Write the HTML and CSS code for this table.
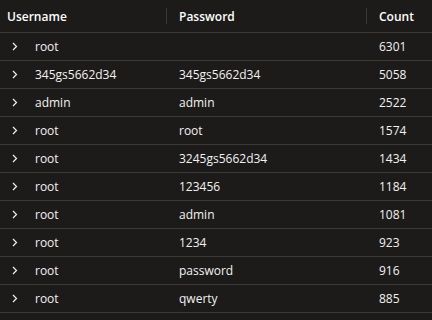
FILE: index.html
```html
<!DOCTYPE html>
<html lang="en">
<head>
  <meta charset="UTF-8">
  <title>Credentials</title>
  <link rel="stylesheet" href="styles.css">
</head>
<body>
  <div class="table">
    <div class="row head">
      <div class="cell first">Username</div>
      <div class="cell"><span class="sep"></span>Password</div>
      <div class="cell"><span class="sep"></span>Count</div>
    </div>
    <div class="row">
      <div class="cell first"><span class="chev"><svg width="6" height="9" viewBox="0 0 6 9"><path d="M1 1l3.5 3.5L1 8" fill="none" stroke="#f3f2f1" stroke-width="1.2"/></svg></span>root</div>
      <div class="cell"></div>
      <div class="cell">6301</div>
    </div>
    <div class="row">
      <div class="cell first"><span class="chev"><svg width="6" height="9" viewBox="0 0 6 9"><path d="M1 1l3.5 3.5L1 8" fill="none" stroke="#f3f2f1" stroke-width="1.2"/></svg></span>345gs5662d34</div>
      <div class="cell">345gs5662d34</div>
      <div class="cell">5058</div>
    </div>
    <div class="row">
      <div class="cell first"><span class="chev"><svg width="6" height="9" viewBox="0 0 6 9"><path d="M1 1l3.5 3.5L1 8" fill="none" stroke="#f3f2f1" stroke-width="1.2"/></svg></span>admin</div>
      <div class="cell">admin</div>
      <div class="cell">2522</div>
    </div>
    <div class="row">
      <div class="cell first"><span class="chev"><svg width="6" height="9" viewBox="0 0 6 9"><path d="M1 1l3.5 3.5L1 8" fill="none" stroke="#f3f2f1" stroke-width="1.2"/></svg></span>root</div>
      <div class="cell">root</div>
      <div class="cell">1574</div>
    </div>
    <div class="row">
      <div class="cell first"><span class="chev"><svg width="6" height="9" viewBox="0 0 6 9"><path d="M1 1l3.5 3.5L1 8" fill="none" stroke="#f3f2f1" stroke-width="1.2"/></svg></span>root</div>
      <div class="cell">3245gs5662d34</div>
      <div class="cell">1434</div>
    </div>
    <div class="row">
      <div class="cell first"><span class="chev"><svg width="6" height="9" viewBox="0 0 6 9"><path d="M1 1l3.5 3.5L1 8" fill="none" stroke="#f3f2f1" stroke-width="1.2"/></svg></span>root</div>
      <div class="cell">123456</div>
      <div class="cell">1184</div>
    </div>
    <div class="row">
      <div class="cell first"><span class="chev"><svg width="6" height="9" viewBox="0 0 6 9"><path d="M1 1l3.5 3.5L1 8" fill="none" stroke="#f3f2f1" stroke-width="1.2"/></svg></span>root</div>
      <div class="cell">admin</div>
      <div class="cell">1081</div>
    </div>
    <div class="row">
      <div class="cell first"><span class="chev"><svg width="6" height="9" viewBox="0 0 6 9"><path d="M1 1l3.5 3.5L1 8" fill="none" stroke="#f3f2f1" stroke-width="1.2"/></svg></span>root</div>
      <div class="cell">1234</div>
      <div class="cell">923</div>
    </div>
    <div class="row">
      <div class="cell first"><span class="chev"><svg width="6" height="9" viewBox="0 0 6 9"><path d="M1 1l3.5 3.5L1 8" fill="none" stroke="#f3f2f1" stroke-width="1.2"/></svg></span>root</div>
      <div class="cell">password</div>
      <div class="cell">916</div>
    </div>
    <div class="row">
      <div class="cell first"><span class="chev"><svg width="6" height="9" viewBox="0 0 6 9"><path d="M1 1l3.5 3.5L1 8" fill="none" stroke="#f3f2f1" stroke-width="1.2"/></svg></span>root</div>
      <div class="cell">qwerty</div>
      <div class="cell">885</div>
    </div>
  </div>
</body>
</html>
```

FILE: styles.css
```css
body {
  margin: 0;
  background: #1c1b1a;
  color: #f3f2f1;
  font-family: "Open Sans", "Noto Sans", sans-serif;
  font-size: 12px;
}
.table {
  display: flex;
  flex-direction: column;
}
.row {
  display: grid;
  grid-template-columns: 166px 200px 1fr;
  height: 27px;
  border-bottom: 1px solid #3b3a39;
}
.row.head {
  height: 32px;
  font-weight: 600;
  color: #ffffff;
}
.cell {
  display: flex;
  align-items: center;
  padding-left: 13px;
  white-space: nowrap;
}
.head .cell {
  padding-left: 0;
}
.sep {
  width: 1px;
  height: 16px;
  background: #3b3a39;
  margin-right: 12px;
}
.row .cell.first {
  padding-left: 12px;
}
.head .cell.first {
  padding-left: 7px;
}
.chev {
  display: flex;
  width: 23px;
}
```
